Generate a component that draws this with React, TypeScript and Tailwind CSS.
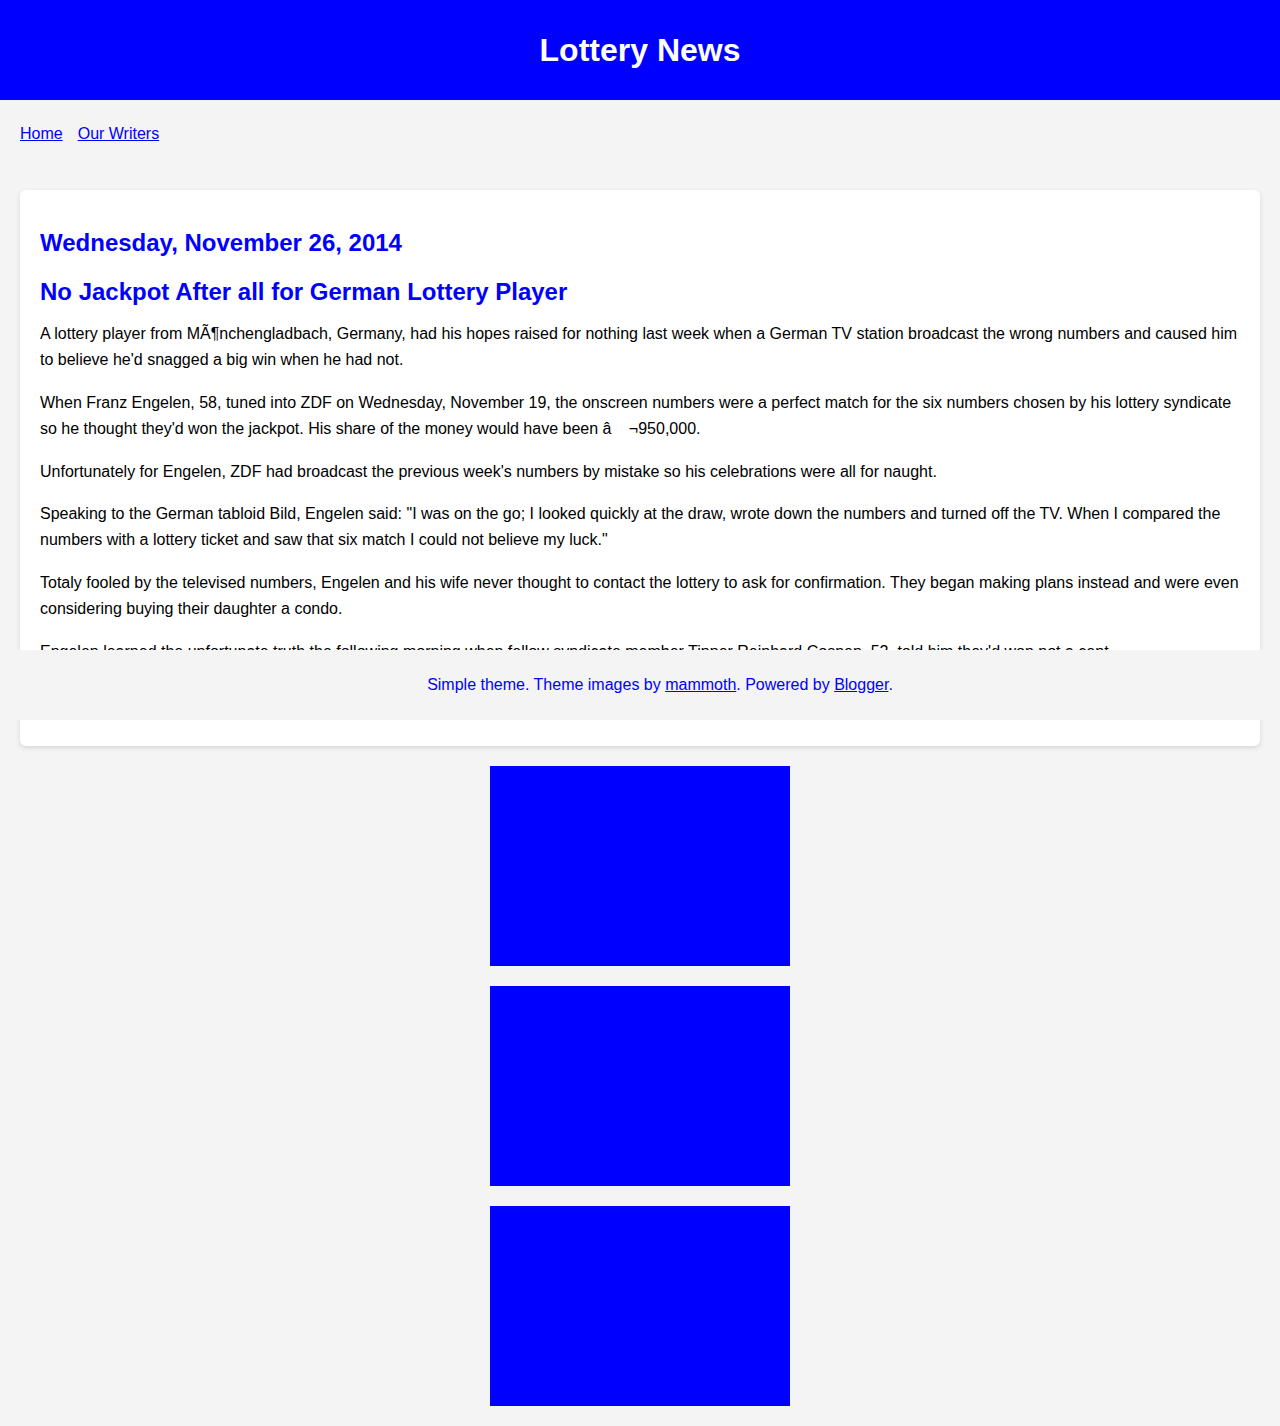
const paragraphs = [
	"A lottery player from MÃ¶nchengladbach, Germany, had his hopes raised for nothing last week when a German TV station broadcast the wrong numbers and caused him to believe he'd snagged a big win when he had not.",
	"When Franz Engelen, 58, tuned into ZDF on Wednesday, November 19, the onscreen numbers were a perfect match for the six numbers chosen by his lottery syndicate so he thought they'd won the jackpot. His share of the money would have been â\u0082\u00a0¬950,000.",
	"Unfortunately for Engelen, ZDF had broadcast the previous week's numbers by mistake so his celebrations were all for naught.",
	"Speaking to the German tabloid Bild, Engelen said: \"I was on the go; I looked quickly at the draw, wrote down the numbers and turned off the TV. When I compared the numbers with a lottery ticket and saw that six match I could not believe my luck.\"",
	"Totaly fooled by the televised numbers, Engelen and his wife never thought to contact the lottery to ask for confirmation. They began making plans instead and were even considering buying their daughter a condo.",
	"Engelen learned the unfortunate truth the following morning when fellow syndicate member Tipper Reinhard Cosnen, 52, told him they'd won not a cent.",
];

export default function App() {
	return (
		<div className="relative min-h-[1426px] bg-[#f4f4f4] font-['Liberation_Sans',Arial,sans-serif] text-black">
			<header className="flex h-[100px] items-center justify-center bg-[#0000ff]">
				<h1 className="text-[32px] font-bold text-white">Lottery News</h1>
			</header>

			<div className="p-5">
				<nav className="flex gap-[15px] pt-[2px] text-base">
					<a href="#" className="text-[#0000ff] underline">Home</a>
					<a href="#" className="text-[#0000ff] underline">Our Writers</a>
				</nav>

				<main className="mt-[44px] rounded-md bg-white px-5 pt-[37px] pb-[65px] shadow-[0_2px_5px_rgba(0,0,0,0.12)]">
					<h2 className="text-2xl font-bold text-[#0000ff]">Wednesday, November 26, 2014</h2>
					<h3 className="mt-[17px] text-2xl font-bold text-[#0000ff]">
						No Jackpot After all for German Lottery Player
					</h3>
					{paragraphs.map((p) => (
						<p key={p.slice(0, 20)} className="mt-[13px] mb-[16px] text-base leading-[1.65]">
							{p}
						</p>
					))}
				</main>

				<div className="mt-5 flex flex-col items-center gap-5">
					<div className="h-[200px] w-[300px] bg-[#0000ff]" />
					<div className="h-[200px] w-[300px] bg-[#0000ff]" />
					<div className="h-[200px] w-[300px] bg-[#0000ff]" />
				</div>
			</div>

			<footer className="absolute left-0 right-0 top-[650px] flex h-[70px] items-center justify-center bg-[#f4f4f4] pl-10 text-base text-[#0000ff]">
				<p>
					Simple theme. Theme images by <a href="#" className="underline">mammoth</a>. Powered by{" "}
					<a href="#" className="underline">Blogger</a>.
				</p>
			</footer>
		</div>
	);
}
